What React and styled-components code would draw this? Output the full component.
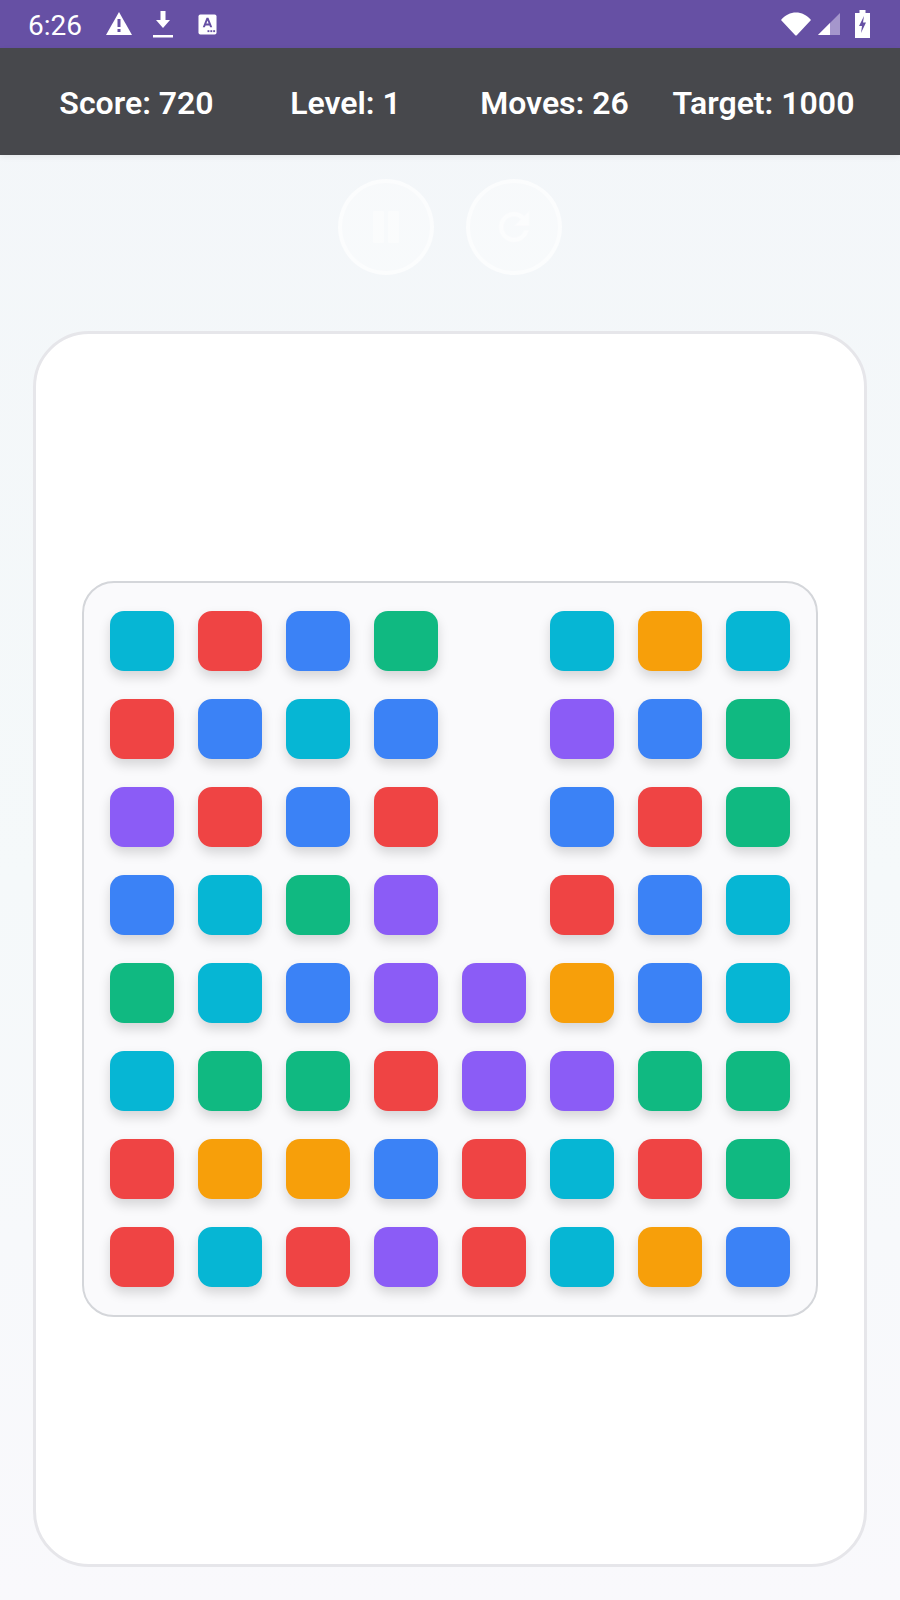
import React from 'react';
import styled, { createGlobalStyle } from 'styled-components';

const colors = {
  C: '#06b6d4',
  R: '#ef4444',
  B: '#3b82f6',
  G: '#10b981',
  O: '#f79f0a',
  V: '#8b5cf6',
};

const board = [
  'CRBG_COC',
  'RBCB_VBG',
  'VRBR_BRG',
  'BCGV_RBC',
  'GCBVVOBC',
  'CGGRVVGG',
  'ROOBRCRG',
  'RCRVRCOB',
];

const GlobalStyle = createGlobalStyle`
  * { box-sizing: border-box; }
  html, body { margin: 0; padding: 0; }
  body {
    font-family: Roboto, "Liberation Sans", sans-serif;
    background: #f5f8fa;
  }
`;

const Screen = styled.div`
  width: 900px;
  height: 1600px;
  display: flex;
  flex-direction: column;
  overflow: hidden;
  background: linear-gradient(180deg, #f3f6f9 0%, #f5f9fa 55%, #f9f9fc 100%);
`;

const StatusBar = styled.div`
  height: 48px;
  flex: none;
  background: #6650a4;
  color: #fff;
  display: flex;
  align-items: center;
  padding: 0 30px 0 28px;
`;

const Time = styled.span`
  font-size: 28px;
  width: 77px;
  padding-top: 2px;
`;

const StatusIcon = styled.svg`
  display: block;
  flex: none;
  margin-left: ${p => p.$ml || 0}px;
`;

const Spacer = styled.div`
  flex: 1;
`;

const Header = styled.header`
  height: 107px;
  flex: none;
  background: #47484c;
  display: grid;
  grid-template-columns: repeat(4, 1fr);
  align-items: center;
  padding: 2px 32px 0;
  box-shadow: 0 2px 6px rgba(0, 0, 0, 0.06);
`;

const Stat = styled.div`
  color: #fff;
  font-size: 32px;
  font-weight: 600;
  text-align: center;
  white-space: nowrap;
`;

const Controls = styled.div`
  display: flex;
  justify-content: center;
  gap: 32px;
  padding-top: 24px;
`;

const RoundButton = styled.div`
  width: 96px;
  height: 96px;
  border-radius: 50%;
  border: 4px solid rgba(255, 255, 255, 0.5);
  background: rgba(255, 255, 255, 0.35);
  display: flex;
  align-items: center;
  justify-content: center;
`;

const Card = styled.main`
  margin: 56px 33px 0;
  height: 1236px;
  background: #fff;
  border: 3px solid #e6e6ea;
  border-radius: 56px;
  display: flex;
  align-items: center;
  justify-content: center;
`;

const Board = styled.div`
  width: 736px;
  height: 736px;
  background: #fafafc;
  border: 2px solid #d4d6da;
  border-radius: 32px;
  padding: 28px 26px;
  display: grid;
  grid-template-columns: repeat(8, 64px);
  grid-auto-rows: 60px;
  column-gap: 24px;
  row-gap: 28px;
`;

const Tile = styled.div`
  border-radius: 14px;
  background: ${p => p.$color};
  box-shadow: 0 6px 12px rgba(0, 0, 0, 0.15);
`;

const Gap = styled.div``;

const App = () => (
  <Screen>
    <GlobalStyle />
    <StatusBar>
      <Time>6:26</Time>
      <StatusIcon width="28" height="24" viewBox="0 0 28 24">
        <path d="M14 0 L27 23 H1 Z" fill="#fff" />
        <rect x="12.5" y="7" width="3" height="8" fill="#6650a4" />
        <rect x="12.5" y="17" width="3" height="3" fill="#6650a4" />
      </StatusIcon>
      <StatusIcon $ml={19} width="22" height="28" viewBox="0 -1 22 28">
        <path d="M8.5 0 H13.5 V9 H18 L11 17 L4 9 H8.5 Z" fill="#fff" />
        <rect x="1" y="24" width="20" height="2.5" fill="#fff" />
      </StatusIcon>
      <StatusIcon $ml={24} width="19" height="21" viewBox="0 0 20 22">
        <rect x="0.5" y="0.5" width="19" height="21" rx="2" fill="#fff" />
        <path d="M5 14 L9 4 H11 L15 14 H12.8 L12 12 H8 L7.2 14 Z M8.8 10 H11.2 L10 6.8 Z" fill="#6650a4" fillRule="evenodd" />
        <rect x="10" y="17" width="2" height="2" fill="#6650a4" />
        <rect x="13" y="17" width="2" height="2" fill="#6650a4" />
        <rect x="16" y="17" width="2" height="2" fill="#6650a4" />
      </StatusIcon>
      <Spacer />
      <StatusIcon width="30" height="24" viewBox="0 0 30 24">
        <path d="M0 8 C8 -2 22 -2 30 8 L16 23 C15.4 23.7 14.6 23.7 14 23 Z" fill="#fff" />
      </StatusIcon>
      <StatusIcon $ml={7} width="22" height="22" viewBox="0 0 22 22">
        <path d="M22 0 V22 H0 Z" fill="#a596cc" />
        <path d="M12 10 V22 H0 Z" fill="#fff" />
      </StatusIcon>
      <StatusIcon $ml={15} width="15" height="28" viewBox="0 0 15 28">
        <path d="M4.5 0 H10.5 V3 H15 V28 H0 V3 H4.5 Z" fill="#fff" />
        <path d="M9 6 L4 16 H7 L6 23 L11 12.5 H8 Z" fill="#6650a4" />
      </StatusIcon>
    </StatusBar>
    <Header>
      <Stat>Score: 720</Stat>
      <Stat>Level: 1</Stat>
      <Stat>Moves: 26</Stat>
      <Stat>Target: 1000</Stat>
    </Header>
    <Controls>
      <RoundButton>
        <svg width="32" height="32" viewBox="0 0 32 32">
          <rect x="3" y="0" width="11" height="32" rx="1" fill="#fff" fillOpacity="0.4" />
          <rect x="18" y="0" width="11" height="32" rx="1" fill="#fff" fillOpacity="0.4" />
        </svg>
      </RoundButton>
      <RoundButton>
        <svg width="44" height="44" viewBox="0 0 24 24">
          <path
            d="M17.65 6.35C16.2 4.9 14.21 4 12 4c-4.42 0-7.99 3.58-7.99 8s3.57 8 7.99 8c3.73 0 6.84-2.55 7.73-6h-2.08c-.82 2.33-3.04 4-5.65 4-3.31 0-6-2.69-6-6s2.69-6 6-6c1.66 0 3.14.69 4.22 1.78L13 11h7V4l-2.35 2.35z"
            fill="#fff"
            fillOpacity="0.5"
            stroke="#fff"
            strokeOpacity="0.3"
            strokeWidth="1"
          />
        </svg>
      </RoundButton>
    </Controls>
    <Card>
      <Board>
        {board.flatMap((row, r) =>
          row.split('').map((c, i) =>
            c === '_' ? <Gap key={`${r}-${i}`} /> : <Tile key={`${r}-${i}`} $color={colors[c]} />
          )
        )}
      </Board>
    </Card>
  </Screen>
);

export default App;
